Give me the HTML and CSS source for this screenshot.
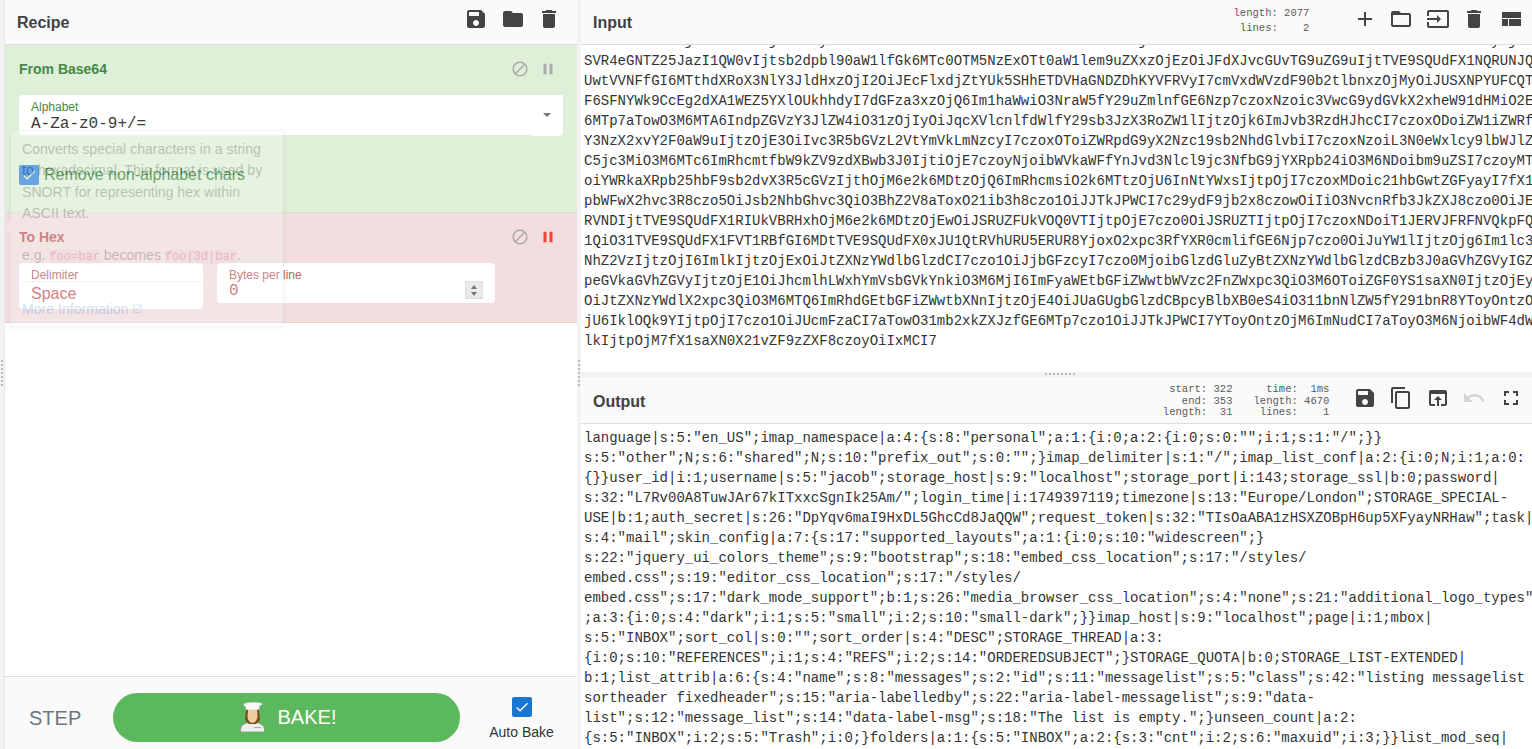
FILE: index.html
```html
<!DOCTYPE html>
<html lang="en">
<head>
<meta charset="utf-8">
<title>CyberChef</title>
<link rel="stylesheet" href="styles.css">
</head>
<body>
<div class="rail"><span class="dots-v"></span></div>
<section class="recipe">
  <header class="head">
    <h2 class="title">Recipe</h2>
    <div class="tools recipe-tools">
      <svg class="ic" viewBox="0 0 24 24"><path d="M17 3H5c-1.110 0-2 .9-2 2v14c0 1.100.89 2 2 2h14c1.100 0 2-.9 2-2V7l-4-4zm-5 16c-1.660 0-3-1.340-3-3s1.340-3 3-3 3 1.340 3 3-1.340 3-3 3zm3-10H5V5h10v4z"/></svg>
      <svg class="ic" viewBox="0 0 24 24"><path d="M10 4H4c-1.100 0-1.990.9-1.990 2L2 18c0 1.100.9 2 2 2h16c1.100 0 2-.9 2-2V8c0-1.100-.9-2-2-2h-8l-2-2z"/></svg>
      <svg class="ic" viewBox="0 0 24 24"><path d="M6 19c0 1.100.9 2 2 2h8c1.100 0 2-.9 2-2V7H6v12zM19 4h-3.500l-1-1h-5l-1 1H5v2h14V4z"/></svg>
    </div>
  </header>

  <div class="op op-green">
    <div class="op-top">
      <span class="op-name">From Base64</span>
      <svg class="mini" viewBox="0 0 24 24"><path d="M12 2C6.480 2 2 6.480 2 12s4.480 10 10 10 10-4.480 10-10S17.520 2 12 2zM4 12c0-4.420 3.580-8 8-8 1.850 0 3.550.63 4.900 1.690L5.690 16.900C4.630 15.550 4 13.850 4 12zm8 8c-1.850 0-3.550-.63-4.900-1.690L18.310 7.100C19.370 8.450 20 10.150 20 12c0 4.420-3.580 8-8 8z"/></svg>
      <svg class="mini" viewBox="0 0 24 24"><path d="M6 19h4V5H6v14zm8-14v14h4V5h-4z"/></svg>
    </div>
    <div class="field field-alpha">
      <div class="field-main">
        <div class="label">Alphabet</div>
        <div class="mono-val">A-Za-z0-9+/=</div>
      </div>
      <div class="caret-box"><span class="caret"></span></div>
    </div>
    <div class="check-row">
      <span class="check-soft"><svg viewBox="0 0 24 24"><path d="M9 16.200 4.800 12l-1.400 1.400L9 19 21 7l-1.400-1.400z"/></svg></span>
      <span class="check-label">Remove non-alphabet chars</span>
    </div>
  </div>

  <div class="op op-red">
    <div class="op-top">
      <span class="op-name">To Hex</span>
      <svg class="mini" viewBox="0 0 24 24"><path d="M12 2C6.480 2 2 6.480 2 12s4.480 10 10 10 10-4.480 10-10S17.520 2 12 2zM4 12c0-4.420 3.580-8 8-8 1.850 0 3.550.63 4.900 1.690L5.690 16.900C4.630 15.550 4 13.850 4 12zm8 8c-1.850 0-3.550-.63-4.900-1.690L18.310 7.100C19.370 8.450 20 10.150 20 12c0 4.420-3.580 8-8 8z"/></svg>
      <svg class="mini mini-on" viewBox="0 0 24 24"><path d="M6 19h4V5H6v14zm8-14v14h4V5h-4z"/></svg>
    </div>
    <div class="hex-fields">
      <div class="field field-delim">
        <div class="label label-line">Delimiter</div>
        <div class="sans-val">Space</div>
      </div>
      <div class="field field-bytes">
        <div class="label">Bytes per line</div>
        <div class="bytes-row">
          <span class="mono-val">0</span>
          <span class="spin"><i class="up"></i><i class="down"></i></span>
        </div>
      </div>
    </div>
  </div>

  <div class="recipe-space"></div>

  <footer class="bake-bar">
    <span class="step">STEP</span>
    <button class="bake">
      <svg class="chef" viewBox="0 0 28 30">
        <path d="M.5 30c0-5 1-7 4-8l4-2h8l4 2c3 1 4 3 4 8z" fill="#eceff0" stroke="#7a7a7a" stroke-width=".6"/>
        <path d="M14 25h7v1h-7z" fill="#a9adb0"/>
        <path d="M6 8h13l1 9c-1 3-3 4-4 5H9c-1-1-3-2-4-5z" fill="#7c4a1e"/>
        <path d="M8 8h9l.5 7c-.5 3-2.500 6-5 6s-4.500-3-5-6z" fill="#f0cd9e"/>
        <path d="M6 7.500 5.500 4.500C3 4 3 1.500 5.500 1.200 9 0 18 0 21 1c2 .5 1.500 2.500-1.500 2.800L19 7.500c-5 1-9 1-13 0z" fill="#fafafa" stroke="#b8b8b8" stroke-width=".5"/>
      </svg>
      <span>BAKE!</span>
    </button>
    <div class="auto">
      <span class="check-solid"><svg viewBox="0 0 24 24"><path d="M9 16.200 4.800 12l-1.400 1.400L9 19 21 7l-1.400-1.400z"/></svg></span>
      <span class="auto-label">Auto Bake</span>
    </div>
  </footer>

  <aside class="pop">
    <span class="pop-arrow"></span>
    <p class="pop-text">Converts special characters in a string to hexadecimal. This format is used by SNORT for representing hex within ASCII text.</p>
    <p class="pop-text pop-eg">e.g. <code>foo=bar</code> becomes <code>foo|3d|bar</code>.</p>
    <a class="pop-link">More Information <svg viewBox="0 0 24 24"><path d="M19 19H5V5h7V3H5a2 2 0 0 0-2 2v14a2 2 0 0 0 2 2h14a2 2 0 0 0 2-2v-7h-2v7zM14 3v2h3.590l-9.830 9.830 1.410 1.410L19 6.410V10h2V3h-7z"/></svg></a>
  </aside>
</section>

<div class="vgutter"><span class="dots-v"></span></div>

<main class="io">
  <section class="pane pane-input">
    <header class="head">
      <h2 class="title">Input</h2>
      <pre class="stats stats-in">length: 2077
 lines:    2</pre>
      <div class="tools io-tools">
        <svg class="ic" viewBox="0 0 24 24"><path d="M19 13h-6v6h-2v-6H5v-2h6V5h2v6h6v2z"/></svg>
        <svg class="ic" viewBox="0 0 24 24"><path d="M20 6h-8l-2-2H4c-1.100 0-1.990.9-1.990 2L2 18c0 1.100.9 2 2 2h16c1.100 0 2-.9 2-2V8c0-1.100-.9-2-2-2zm0 12H4V8h16v10z"/></svg>
        <svg class="ic" viewBox="0 0 24 24"><path d="M21 3.010H3c-1.100 0-2 .9-2 2V9h2V4.990h18v14.030H3V15H1v4.010c0 1.100.9 1.980 2 1.980h18c1.100 0 2-.88 2-1.980v-14c0-1.110-.9-2-2-2zM11 16l4-4-4-4v3H1v2h10v3z"/></svg>
        <svg class="ic" viewBox="0 0 24 24"><path d="M6 19c0 1.100.9 2 2 2h8c1.100 0 2-.9 2-2V7H6v12zM19 4h-3.500l-1-1h-5l-1 1H5v2h14V4z"/></svg>
        <svg class="ic" viewBox="0 0 24 24"><path d="M3 19h6v-7H3v7zm7 0h12v-7H10v7zM3 5v6h19V5H3z"/></svg>
      </div>
    </header>
    <div class="text-clip">
<pre class="io-text io-text-in">0fHM6OToibG9jYWxob3N0IjtzdG9yYWdlX3BvcnR8aToxNDM7c3RvcmFnZV9zc2x8YjowO3Bhc3N3b3JkfHM6MzI6Ikw3UnYwMEE4VHV3SkFyNjdr
SVR4eGNTZ25JazI1QW0vIjtsb2dpbl90aW1lfGk6MTc0OTM5NzExOTt0aW1lem9uZXxzOjEzOiJFdXJvcGUvTG9uZG9uIjtTVE9SQUdFX1NQRUNJQ
UwtVVNFfGI6MTthdXRoX3NlY3JldHxzOjI2OiJEcFlxdjZtYUk5SHhETDVHaGNDZDhKYVFRVyI7cmVxdWVzdF90b2tlbnxzOjMyOiJUSXNPYUFCQT
F6SFNYWk9CcEg2dXA1WEZ5YXlOUkhhdyI7dGFza3xzOjQ6Im1haWwiO3NraW5fY29uZmlnfGE6Nzp7czoxNzoic3VwcG9ydGVkX2xheW91dHMiO2E
6MTp7aTowO3M6MTA6IndpZGVzY3JlZW4iO31zOjIyOiJqcXVlcnlfdWlfY29sb3JzX3RoZW1lIjtzOjk6ImJvb3RzdHJhcCI7czoxODoiZW1iZWRf
Y3NzX2xvY2F0aW9uIjtzOjE3OiIvc3R5bGVzL2VtYmVkLmNzcyI7czoxOToiZWRpdG9yX2Nzc19sb2NhdGlvbiI7czoxNzoiL3N0eWxlcy9lbWJlZ
C5jc3MiO3M6MTc6ImRhcmtfbW9kZV9zdXBwb3J0IjtiOjE7czoyNjoibWVkaWFfYnJvd3Nlcl9jc3NfbG9jYXRpb24iO3M6NDoibm9uZSI7czoyMT
oiYWRkaXRpb25hbF9sb2dvX3R5cGVzIjthOjM6e2k6MDtzOjQ6ImRhcmsiO2k6MTtzOjU6InNtYWxsIjtpOjI7czoxMDoic21hbGwtZGFyayI7fX1
pbWFwX2hvc3R8czo5OiJsb2NhbGhvc3QiO3BhZ2V8aToxO21ib3h8czo1OiJJTkJPWCI7c29ydF9jb2x8czowOiIiO3NvcnRfb3JkZXJ8czo0OiJE
RVNDIjtTVE9SQUdFX1RIUkVBRHxhOjM6e2k6MDtzOjEwOiJSRUZFUkVOQ0VTIjtpOjE7czo0OiJSRUZTIjtpOjI7czoxNDoiT1JERVJFRFNVQkpFQ
1QiO31TVE9SQUdFX1FVT1RBfGI6MDtTVE9SQUdFX0xJU1QtRVhURU5ERUR8YjoxO2xpc3RfYXR0cmlifGE6Njp7czo0OiJuYW1lIjtzOjg6Im1lc3
NhZ2VzIjtzOjI6ImlkIjtzOjExOiJtZXNzYWdlbGlzdCI7czo1OiJjbGFzcyI7czo0MjoibGlzdGluZyBtZXNzYWdlbGlzdCBzb3J0aGVhZGVyIGZ
peGVkaGVhZGVyIjtzOjE1OiJhcmlhLWxhYmVsbGVkYnkiO3M6MjI6ImFyaWEtbGFiZWwtbWVzc2FnZWxpc3QiO3M6OToiZGF0YS1saXN0IjtzOjEy
OiJtZXNzYWdlX2xpc3QiO3M6MTQ6ImRhdGEtbGFiZWwtbXNnIjtzOjE4OiJUaGUgbGlzdCBpcyBlbXB0eS4iO311bnNlZW5fY291bnR8YToyOntzO
jU6IklOQk9YIjtpOjI7czo1OiJUcmFzaCI7aTowO31mb2xkZXJzfGE6MTp7czo1OiJJTkJPWCI7YToyOntzOjM6ImNudCI7aToyO3M6NjoibWF4dW
lkIjtpOjM7fX1saXN0X21vZF9zZXF8czoyOiIxMCI7</pre>
    </div>
  </section>

  <div class="hgutter"><span class="dots-h"></span></div>

  <section class="pane pane-output">
    <header class="head head-out">
      <h2 class="title">Output</h2>
      <pre class="stats stats-sel">start: 322
  end: 353
length:  31</pre>
      <pre class="stats stats-res">  time:  1ms
length: 4670
 lines:    1</pre>
      <div class="tools io-tools">
        <svg class="ic" viewBox="0 0 24 24"><path d="M17 3H5c-1.110 0-2 .9-2 2v14c0 1.100.89 2 2 2h14c1.100 0 2-.9 2-2V7l-4-4zm-5 16c-1.660 0-3-1.340-3-3s1.340-3 3-3 3 1.340 3 3-1.340 3-3 3zm3-10H5V5h10v4z"/></svg>
        <svg class="ic" viewBox="0 0 24 24"><path d="M16 1H4c-1.100 0-2 .9-2 2v14h2V3h12V1zm3 4H8c-1.100 0-2 .9-2 2v14c0 1.100.9 2 2 2h11c1.100 0 2-.9 2-2V7c0-1.100-.9-2-2-2zm0 16H8V7h11v14z"/></svg>
        <svg class="ic" viewBox="0 0 24 24"><path d="M19 4H5c-1.110 0-2 .9-2 2v12c0 1.100.89 2 2 2h4v-2H5V8h14v10h-4v2h4c1.100 0 2-.9 2-2V6c0-1.100-.9-2-2-2zm-7 6l-4 4h3v6h2v-6h3l-4-4z"/></svg>
        <svg class="ic ic-off" viewBox="0 0 24 24"><path d="M12.500 8c-2.650 0-5.050.99-6.900 2.600L2 7v9h9l-3.620-3.620c1.390-1.160 3.160-1.880 5.120-1.880 3.540 0 6.550 2.310 7.600 5.500l2.370-.78C21.080 11.030 17.150 8 12.500 8z"/></svg>
        <svg class="ic" viewBox="0 0 24 24"><path d="M7 14H5v5h5v-2H7v-3zm-2-4h2V7h3V5H5v5zm12 7h-3v2h5v-5h-2v3zM14 5v2h3v3h2V5h-5z"/></svg>
      </div>
    </header>
    <div class="text-clip">
<pre class="io-text io-text-out">language|s:5:"en_US";imap_namespace|a:4:{s:8:"personal";a:1:{i:0;a:2:{i:0;s:0:"";i:1;s:1:"/";}}
s:5:"other";N;s:6:"shared";N;s:10:"prefix_out";s:0:"";}imap_delimiter|s:1:"/";imap_list_conf|a:2:{i:0;N;i:1;a:0:
{}}user_id|i:1;username|s:5:"jacob";storage_host|s:9:"localhost";storage_port|i:143;storage_ssl|b:0;password|
s:32:"L7Rv00A8TuwJAr67kITxxcSgnIk25Am/";login_time|i:1749397119;timezone|s:13:"Europe/London";STORAGE_SPECIAL-
USE|b:1;auth_secret|s:26:"DpYqv6maI9HxDL5GhcCd8JaQQW";request_token|s:32:"TIsOaABA1zHSXZOBpH6up5XFyayNRHaw";task|
s:4:"mail";skin_config|a:7:{s:17:"supported_layouts";a:1:{i:0;s:10:"widescreen";}
s:22:"jquery_ui_colors_theme";s:9:"bootstrap";s:18:"embed_css_location";s:17:"/styles/
embed.css";s:19:"editor_css_location";s:17:"/styles/
embed.css";s:17:"dark_mode_support";b:1;s:26:"media_browser_css_location";s:4:"none";s:21:"additional_logo_types"
;a:3:{i:0;s:4:"dark";i:1;s:5:"small";i:2;s:10:"small-dark";}}imap_host|s:9:"localhost";page|i:1;mbox|
s:5:"INBOX";sort_col|s:0:"";sort_order|s:4:"DESC";STORAGE_THREAD|a:3:
{i:0;s:10:"REFERENCES";i:1;s:4:"REFS";i:2;s:14:"ORDEREDSUBJECT";}STORAGE_QUOTA|b:0;STORAGE_LIST-EXTENDED|
b:1;list_attrib|a:6:{s:4:"name";s:8:"messages";s:2:"id";s:11:"messagelist";s:5:"class";s:42:"listing messagelist
sortheader fixedheader";s:15:"aria-labelledby";s:22:"aria-label-messagelist";s:9:"data-
list";s:12:"message_list";s:14:"data-label-msg";s:18:"The list is empty.";}unseen_count|a:2:
{s:5:"INBOX";i:2;s:5:"Trash";i:0;}folders|a:1:{s:5:"INBOX";a:2:{s:3:"cnt";i:2;s:6:"maxuid";i:3;}}list_mod_seq|</pre>
    </div>
  </section>
</main>
</body>
</html>
```
FILE: styles.css
```css
* { box-sizing: border-box; }
html, body { height: 100%; }
body {
  margin: 0;
  height: 749px;
  display: flex;
  overflow: hidden;
  background: #fff;
  font-family: "Liberation Sans", Arial, sans-serif;
  color: #333;
}
.rail { width: 5px; flex: none; background: #f3f3f3; border-right: 1px solid #e8e8e8; position: relative; }
.recipe { position: relative; width: 572px; flex: none; display: flex; flex-direction: column; height: 749px; }
.vgutter { width: 4px; flex: none; background: #f3f3f3; position: relative; }
.dots-v {
  position: absolute; left: 1px; top: 360px; width: 2px; height: 28px;
  background: repeating-linear-gradient(to bottom, #bbb 0 2px, transparent 2px 4px);
}
.io { flex: 1; min-width: 0; display: flex; flex-direction: column; height: 749px; }

.head {
  height: 45px; flex: none; display: flex; align-items: center;
  padding: 0 0 0 12px; background: #fafafa; border-bottom: 1px solid #ddd;
}
.title { margin: 0; font-size: 16px; line-height: 20px; font-weight: 700; color: #424242; flex: 1; padding-top: 1px; }
.tools { display: flex; flex: none; }
.ic { width: 24px; height: 24px; fill: #444; display: block; }
.ic-off { fill: #d4d4d4; }
.recipe-tools { gap: 12.500px; margin-right: 16px; margin-top: -6px; }
.io-tools { gap: 12.400px; margin-right: 9.500px; margin-top: -6px; }

.op { flex: none; padding: 13px 14px 0; }
.op-green { background: #dff0d8; height: 168px; border-bottom: 1px solid #d0e4c8; color: #468847; }
.op-red { background: #f2dede; height: 110px; border-bottom: 1px solid #e6d0d0; color: #c0605f; }
.op-top { display: flex; align-items: center; height: 22px; padding-right: 6px; }
.op-name { flex: 1; font-size: 14px; font-weight: 700; }
.mini { width: 18px; height: 18px; fill: #aaa; display: block; margin-left: 10px; }
.mini-on { fill: #f44336; }
.field { background: #fff; border-radius: 4px; color: inherit; }
.field-alpha { margin-top: 15px; width: 544px; height: 40px; display: flex; }
.field-main { flex: 1; padding: 5px 12px 0; }
.field-main .mono-val { margin-top: 2px; }
.label { font-size: 12px; line-height: 14px; }
.mono-val { font-family: "Liberation Mono", monospace; font-size: 16px; line-height: 16px; color: #3a3a3a; }
.caret-box { width: 32px; height: 41px; background: #fff; display: flex; align-items: center; justify-content: center; padding-bottom: 2px; border-radius: 0 0 4px 0; }
.caret { width: 0; height: 0; border-left: 4px solid transparent; border-right: 4px solid transparent; border-top: 4px solid #6c757d; }
.check-row { display: flex; align-items: center; margin-top: 30px; height: 20px; gap: 5px; }
.check-soft { width: 20px; height: 20px; border-radius: 2px; background: #3d8bdb; display: flex; align-items: center; justify-content: center; }
.check-soft svg { width: 16px; height: 16px; fill: #e9efd8; }
.check-label { font-size: 16px; line-height: 20px; color: #3f8a45; }

.hex-fields { display: flex; align-items: flex-start; gap: 14px; margin-top: 15px; }
.field-delim { width: 184px; height: 46px; padding-top: 5px; }
.field-bytes { width: 278px; height: 40px; padding: 5px 12px 0; }
.label-line { padding: 0 0 1px 12px; height: 14px; position: relative; }
.label-line::after { content: ""; position: absolute; left: 3px; right: 2px; top: 13px; height: 1px; background: #eee; }
.sans-val { font-size: 16px; line-height: 20px; padding: 2px 12px 0; }
.bytes-row { display: flex; align-items: flex-start; justify-content: space-between; margin-top: 1px; }
.bytes-row .mono-val { color: #c0605f; }
.spin { width: 18px; height: 18px; margin-top: -2px; background: #eaeaea; border: 1px solid #ddd; display: flex; flex-direction: column; align-items: center; justify-content: center; gap: 3px; }
.spin i { width: 0; height: 0; border-left: 3px solid transparent; border-right: 3px solid transparent; }
.spin .up { border-bottom: 4px solid #777; }
.spin .down { border-top: 4px solid #777; }

.recipe-space { flex: 1; }
.bake-bar { height: 73px; flex: none; background: #fafafa; border-top: 1px solid #ddd; display: flex; align-items: flex-start; padding: 16px 0 0 24px; }
.step { font-size: 20px; line-height: 24px; margin-top: 13px; color: #6c757d; width: 84px; flex: none; }
.bake {
  width: 347px; height: 49px; flex: none; border: 0; border-radius: 25px; background: #5cb85c; color: #fff;
  display: flex; align-items: center; justify-content: center; gap: 10px;
  font: 20px/24px "Liberation Sans", Arial, sans-serif; padding: 0 0 2px 3px;
}
.chef { width: 28px; height: 30px; display: block; margin-top: 1px; }
.auto { width: 117px; flex: none; display: flex; flex-direction: column; align-items: center; padding: 4px 0 0 6px; }
.check-solid { width: 20px; height: 20px; border-radius: 2px; background: #1976d2; display: flex; align-items: center; justify-content: center; }
.check-solid svg { width: 16px; height: 16px; fill: #fff; }
.auto-label { font-size: 14px; line-height: 16px; margin-top: 7px; color: #333; }

.pop {
  position: absolute; left: 5px; top: 130px; width: 274px; height: 197px;
  padding: 8px 12px 0 11px; border-radius: 4px; border: 1px solid rgba(0,0,0,.2);
  background: #fff; opacity: .22; box-shadow: 0 1px 4px rgba(0,0,0,.2);
  color: #212529; font-size: 14.100px; line-height: 21.400px;
}
.pop-arrow { position: absolute; left: -5px; top: 90px; width: 12px; height: 12px; background: #fff; transform: rotate(45deg); }
.pop-text { margin: 0; position: relative; }
.pop-eg { margin-top: 20px; }
.pop-eg code { font-family: "Liberation Mono", monospace; font-size: 12px; color: #c7254e; background: #f0e0e0; }
.pop-link { display: block; margin-top: 31px; color: #2a7ae2; position: relative; }
.pop-link svg { width: 11px; height: 11px; fill: #2a7ae2; }

.pane { display: flex; flex-direction: column; min-height: 0; }
.pane-input { height: 372px; }
.hgutter { height: 5px; flex: none; background: #f2f2f2; position: relative; }
.dots-h { position: absolute; left: 464px; top: 1px; width: 30px; height: 2px; background: repeating-linear-gradient(to right, #bbb 0 2px, transparent 2px 4px); }
.pane-output { flex: 1; }
.head-out { height: 47px; padding-top: 2px; }
.stats { margin: 0; font-family: "Liberation Mono", monospace; font-size: 10.560px; color: #5a5a5a; flex: none; }
.stats-in { line-height: 15px; margin-right: 43.500px; margin-top: -3px; }
.stats-sel { line-height: 11.700px; text-align: right; margin-right: 21px; margin-top: 1px; }
.stats-res { line-height: 11.700px; text-align: right; margin-right: 23.500px; margin-top: 1px; }
.text-clip { flex: 1; overflow: hidden; min-height: 0; }
.io-text {
  margin: 0; padding-left: 3px; font-family: "Liberation Mono", monospace; font-size: 14px; line-height: 20px;
  color: #333; white-space: pre;
}
.io-text-in { margin-top: -14px; }
.io-text-out { margin-top: 4px; }
```
